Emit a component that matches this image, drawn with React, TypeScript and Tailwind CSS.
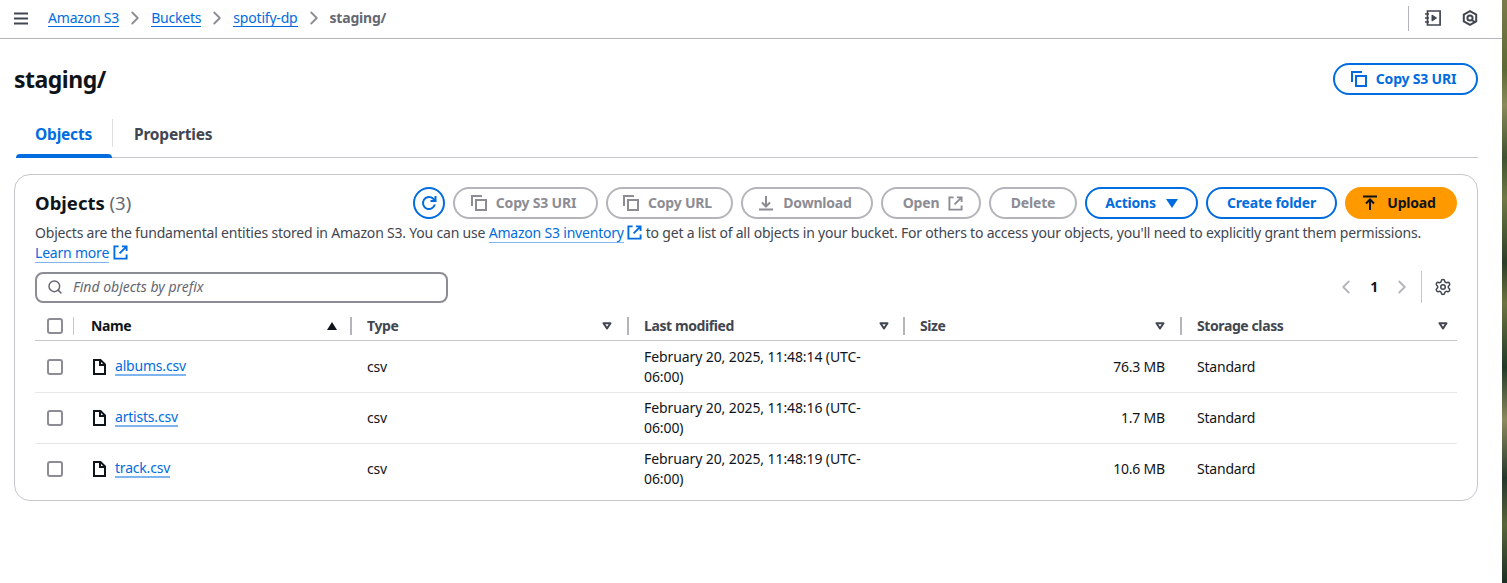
import type { ReactNode } from 'react';
import { ChevronLeft, ChevronRight, Settings, Search } from 'lucide-react';

function CopyIcon() {
  return (
    <svg width="16" height="16" viewBox="0 0 16 16" fill="none" stroke="currentColor" strokeWidth="2" className="shrink-0">
      <path d="M1 11V1h10" />
      <rect x="5" y="5" width="10" height="10" />
    </svg>
  );
}

function ExternalIcon({ className }: { className?: string }) {
  return (
    <svg width="15" height="15" viewBox="0 0 16 16" fill="none" stroke="currentColor" strokeWidth="2" className={className}>
      <path d="M6 1.5H1.5v13h13V10" />
      <path d="M7 9 14 2M9.5 1.5h5v5" />
    </svg>
  );
}

function FileIcon() {
  return (
    <svg width="13" height="16" viewBox="0 0 13 16" fill="none" stroke="#0f141a" strokeWidth="2" className="shrink-0">
      <path d="M1 1h6.5L12 5.5V15H1z" />
      <path d="M7 1v5h5" />
    </svg>
  );
}

function SortCaret() {
  return (
    <svg width="10" height="8" viewBox="0 0 10 8" fill="none" stroke="#424650" strokeWidth="2" strokeLinejoin="round" className="shrink-0">
      <path d="M1.5 1.2h7L5 6.5z" />
    </svg>
  );
}

function PillButton({ children, tone, width }: { children: ReactNode; tone: 'muted' | 'blue' | 'orange'; width: string }) {
  const tones = {
    muted: 'border-[#b4b4bb] text-[#8c8c94]',
    blue: 'border-[#006ce0] text-[#006ce0]',
    orange: 'border-[#ff9900] bg-[#ff9900] text-[#0f141a]',
  };
  return (
    <button className={`flex h-8 shrink-0 items-center justify-center gap-[9px] rounded-full border-2 text-sm font-bold ${tones[tone]} ${width}`}>
      {children}
    </button>
  );
}

function CheckBox() {
  return <span className="block h-4 w-4 rounded-[3px] border-2 border-[#8c8c94] bg-white" />;
}

function ColumnHeader({ label, width, sorted, gap }: { label: string; width: string; sorted?: boolean; gap: string }) {
  return (
    <div className={`flex items-center ${width}`}>
      <span className={`flex-1 pl-[15px] text-sm font-bold tracking-[-0.4px] ${sorted ? 'text-[#0f141a]' : 'text-[#424650]'}`}>{label}</span>
      {sorted ? (
        <svg width="10" height="8" viewBox="0 0 10 8" fill="#0f141a" className="shrink-0">
          <path d="M0 8 5 0l5 8z" />
        </svg>
      ) : (
        <SortCaret />
      )}
      <span className={`h-[18px] w-[2px] bg-[#b4b4bb] ${gap}`} />
    </div>
  );
}

const objects = [
  { name: 'albums.csv', time: '11:48:14', size: '76.3 MB', height: 'h-[52px]' },
  { name: 'artists.csv', time: '11:48:16', size: '1.7 MB', height: 'h-[51px]' },
  { name: 'track.csv', time: '11:48:19', size: '10.6 MB', height: 'h-[50px]' },
];

export default function App() {
  return (
    <div className="flex h-[583px] w-[1507px] overflow-hidden bg-white font-['Noto_Sans',sans-serif] text-sm tracking-[-0.2px] text-[#0f141a]">
      <main className="w-[1502px] shrink-0">
        <header className="flex h-[39px] items-center border-b border-[#b4b4bb] pb-[2px] pl-[14px] pr-[24px]">
          <svg width="15" height="13" viewBox="0 0 15 13" fill="none" stroke="#424650" strokeWidth="2" className="shrink-0">
            <path d="M0 1.5h14M0 6.5h14M0 11.5h14" />
          </svg>
          <nav className="ml-[19px] flex items-center text-sm">
            <a className="border-b border-[#006ce0] leading-[17px] text-[#006ce0]">Amazon S3</a>
            <ChevronRight size={22} strokeWidth={2} className="mx-[5px] text-[#8c8c94]" />
            <a className="border-b border-[#006ce0] leading-[17px] text-[#006ce0]">Buckets</a>
            <ChevronRight size={22} strokeWidth={2} className="mx-[5px] text-[#8c8c94]" />
            <a className="border-b border-[#006ce0] leading-[17px] text-[#006ce0]">spotify-dp</a>
            <ChevronRight size={22} strokeWidth={2} className="mx-[5px] text-[#8c8c94]" />
            <span className="font-bold text-[#656871]">staging/</span>
          </nav>
          <div className="ml-auto flex items-center gap-[15px]">
            <span className="h-[25px] w-px bg-[#b4b4bb]" />
            <svg width="17" height="16" viewBox="0 0 17 16" fill="none" stroke="#424650" strokeWidth="1.7">
              <path d="M3.5 1h12.6v14H3.5z" />
              <path d="M1 4h4M1 8h4M1 12h4" />
              <path d="M8 5v6l4.5-3z" fill="#424650" strokeWidth="1" />
            </svg>
            <svg width="16" height="16" viewBox="0 0 16 16" fill="none" stroke="#424650" strokeWidth="2" className="ml-[6px]">
              <path d="M8 1.2 14.2 4.6v6.8L8 14.8 1.8 11.4V4.6z" />
              <circle cx="8" cy="8" r="2.6" />
              <path d="m9.5 10 3.5 2" />
            </svg>
          </div>
        </header>

        <div className="flex h-[80px] items-center justify-between pl-[14px] pr-6">
          <h1 className="text-[23px] leading-8 font-bold tracking-[-0.5px]">staging/</h1>
          <PillButton tone="blue" width="w-[145px] pr-[4px]">
            <CopyIcon />
            Copy S3 URI
          </PillButton>
        </div>

        <div className="ml-[16px] mr-6 flex h-[39px] items-stretch border-b border-[#c6c6cd]">
          <div className="relative flex w-[97px] items-start justify-center pr-[2px] pt-[4px] text-[15.5px] font-bold text-[#006ce0]">
            Objects
            <span className="absolute bottom-[-1px] left-0 h-[4px] w-[96px] rounded-t-sm bg-[#006ce0]" />
            <span className="absolute right-0 top-0 h-[28px] w-px bg-[#dedee3]" />
          </div>
          <div className="pl-[21px] pt-[4px] text-[15.5px] font-bold text-[#424650]">Properties</div>
        </div>

        <section className="ml-[14px] mr-6 mt-[16px] h-[327px] rounded-2xl border border-[#c6c6cd] px-5 pt-[12px]">
          <div className="flex h-8 items-center">
            <h2 className="text-[18.5px] font-bold tracking-normal">
              Objects <span className="font-normal text-[#656871]">(3)</span>
            </h2>
            <div className="ml-auto flex items-center gap-2">
              <button className="flex h-8 w-8 items-center justify-center rounded-full border-2 border-[#006ce0] text-[#006ce0]">
                <svg width="16" height="16" viewBox="0 0 16 16" fill="none" stroke="currentColor" strokeWidth="2">
                  <path d="M13.8 9.5A6 6 0 1 1 12 3.6L14 5.5" />
                  <path d="M14.5 1v5h-5" />
                </svg>
              </button>
              <PillButton tone="muted" width="w-[145px] pr-[4px]">
                <CopyIcon />
                Copy S3 URI
              </PillButton>
              <PillButton tone="muted" width="w-[127px] pr-[4px]">
                <CopyIcon />
                Copy URL
              </PillButton>
              <PillButton tone="muted" width="w-[132px] pr-[4px]">
                <svg width="16" height="16" viewBox="0 0 16 16" fill="none" stroke="currentColor" strokeWidth="2">
                  <path d="M1 14.5h14M8 1v10M4 7.5 8 11.5l4-4" />
                </svg>
                Download
              </PillButton>
              <PillButton tone="muted" width="w-[100px] pl-[4px]">
                Open
                <ExternalIcon />
              </PillButton>
              <PillButton tone="muted" width="w-[88px]">
                Delete
              </PillButton>
              <PillButton tone="blue" width="w-[113px]">
                Actions
                <svg width="12" height="9" viewBox="0 0 12 9" fill="currentColor" className="ml-[1px]">
                  <path d="M0 0h12L6 9z" />
                </svg>
              </PillButton>
              <PillButton tone="blue" width="w-[131px]">
                Create folder
              </PillButton>
              <PillButton tone="orange" width="w-[112px] pr-[4px]">
                <svg width="16" height="16" viewBox="0 0 16 16" fill="none" stroke="currentColor" strokeWidth="2">
                  <path d="M1 1.5h14M8 15V5M4 8.5 8 4.5l4 4" />
                </svg>
                Upload
              </PillButton>
            </div>
          </div>

          <p className="mt-[4px] leading-5 text-[#424650]">
            Objects are the fundamental entities stored in Amazon S3. You can use{' '}
            <a className="border-b border-[#7fb5ef] text-[#006ce0]">Amazon S3 inventory</a>{' '}
            <ExternalIcon className="inline align-[-2px] text-[#006ce0]" /> to get a list of all objects in your bucket. For others to access your objects, you&apos;ll need to explicitly grant them permissions.
            <br />
            <a className="border-b border-[#7fb5ef] text-[#006ce0]">Learn more</a>{' '}
            <ExternalIcon className="inline align-[-2px] text-[#006ce0]" />
          </p>

          <div className="mt-[8px] flex h-[32px] items-center">
            <div className="flex h-[31px] w-[413px] items-center gap-[10px] rounded-lg border-2 border-[#8c8c94] pl-[10px]">
              <Search size={16} strokeWidth={2.2} className="text-[#656871]" />
              <span className="text-sm italic tracking-normal text-[#656871]">Find objects by prefix</span>
            </div>
            <div className="ml-auto flex items-center">
              <ChevronLeft size={22} className="text-[#b4b4bb]" />
              <span className="mx-[13px] text-sm font-bold">1</span>
              <ChevronRight size={22} className="text-[#b4b4bb]" />
              <span className="ml-[8px] mr-[12px] h-[32px] w-px bg-[#c6c6cd]" />
              <Settings size={18} strokeWidth={2} className="mr-[5px] text-[#424650]" />
            </div>
          </div>

          <div className="mt-[9px] flex h-[29px] items-center border-b border-[#c6c6cd]">
            <div className="flex w-[41px] items-center pl-[12px]">
              <CheckBox />
              <span className="ml-[10px] h-[18px] w-[1px] bg-[#c6c6cd]" />
            </div>
            <ColumnHeader label="Name" width="w-[276px]" gap="ml-[13px]" sorted />
            <ColumnHeader label="Type" width="w-[277px]" gap="ml-[15px]" />
            <ColumnHeader label="Last modified" width="w-[276px]" gap="ml-[14px]" />
            <ColumnHeader label="Size" width="w-[277px]" gap="ml-[15px]" />
            <div className="flex w-[275px] items-center pr-[9px]">
              <span className="flex-1 pl-[15px] text-sm font-bold tracking-[-0.4px] text-[#424650]">Storage class</span>
              <SortCaret />
            </div>
          </div>

          {objects.map((item, index) => (
            <div
              key={item.name}
              className={`flex items-center ${item.height} ${index < objects.length - 1 ? 'border-b border-[#e8e8ec]' : ''}`}
            >
              <div className="w-[40px] pl-[12px]">
                <CheckBox />
              </div>
              <div className="flex w-[276px] items-center gap-[9px] pl-[18px]">
                <FileIcon />
                <a className="border-b-2 border-[#7fb5ef] leading-[16px] text-[#006ce0]">{item.name}</a>
              </div>
              <div className="w-[277px] pl-[16px]">csv</div>
              <div className="w-[276px] pl-[16px] pr-[20px] leading-5 tracking-[-0.1px]">
                February 20, 2025, {item.time} (UTC-06:00)
              </div>
              <div className="w-[277px] pr-[16px] text-right">{item.size}</div>
              <div className="pl-[16px]">Standard</div>
            </div>
          ))}
        </section>
      </main>
      <div className="flex-1 bg-[linear-gradient(180deg,#7d7a4a_0%,#5c6a35_12%,#8a8a5a_18%,#3f5230_27%,#6f7a45_34%,#2c3f28_45%,#6d7440_52%,#1f3a26_63%,#8c8a5e_72%,#24382a_82%,#58663a_90%,#1c3024_100%)]" />
    </div>
  );
}
